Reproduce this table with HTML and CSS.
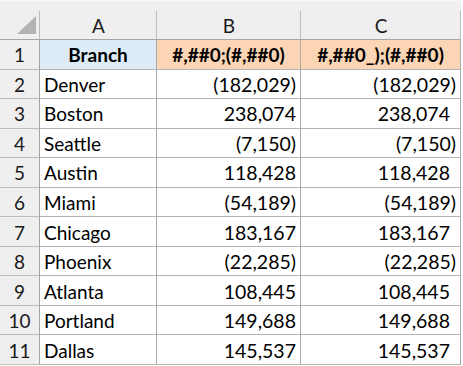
FILE: index.html
```html
<!DOCTYPE html>
<html>
<head>
<meta charset="utf-8">
<link rel="stylesheet" href="styles.css">
</head>
<body>
<div class="sheet">
  <div class="hd corner"><svg class="tri" width="19" height="18" viewBox="0 0 19 18"><polygon points="19,0 19,18 0,18" fill="#b3b3b3"/></svg></div>
  <div class="hd col">A</div>
  <div class="hd col">B</div>
  <div class="hd col">C</div>

  <div class="rh">1</div>
  <div class="c title blue">Branch</div>
  <div class="c title peach">#,##0;(#,##0)</div>
  <div class="c title peach">#,##0_);(#,##0)</div>

  <div class="rh">2</div><div class="c">Denver</div><div class="c num">(182,029)</div><div class="c num">(182,029)</div>
  <div class="rh">3</div><div class="c">Boston</div><div class="c num">238,074</div><div class="c num pos">238,074</div>
  <div class="rh">4</div><div class="c">Seattle</div><div class="c num">(7,150)</div><div class="c num">(7,150)</div>
  <div class="rh">5</div><div class="c">Austin</div><div class="c num">118,428</div><div class="c num pos">118,428</div>
  <div class="rh">6</div><div class="c">Miami</div><div class="c num">(54,189)</div><div class="c num">(54,189)</div>
  <div class="rh">7</div><div class="c">Chicago</div><div class="c num">183,167</div><div class="c num pos">183,167</div>
  <div class="rh">8</div><div class="c">Phoenix</div><div class="c num">(22,285)</div><div class="c num">(22,285)</div>
  <div class="rh">9</div><div class="c">Atlanta</div><div class="c num">108,445</div><div class="c num pos">108,445</div>
  <div class="rh">10</div><div class="c">Portland</div><div class="c num">149,688</div><div class="c num pos">149,688</div>
  <div class="rh">11</div><div class="c">Dallas</div><div class="c num">145,537</div><div class="c num pos">145,537</div>
</div>
</body>
</html>
```

FILE: styles.css
```css
html, body {
  margin: 0;
  padding: 0;
  background: #ffffff;
}
.sheet {
  display: grid;
  grid-template-columns: 40px 117px 144px 160px;
  grid-template-rows: 40px repeat(11, 29.55px);
  font-family: Lato, "Open Sans", sans-serif;
  font-size: 19px;
  color: #000;
}
.hd {
  background: #efefef linear-gradient(#bcbcbc, #bcbcbc) right bottom / 1px 28px no-repeat;
  border-bottom: 1px solid #a6a6a6;
  border-top: 1px solid #f8f8f8;
  box-sizing: border-box;
}
.col {
  display: flex;
  align-items: center;
  justify-content: center;
  padding-top: 11px;
  color: #1a1a1a;
}
.corner {
  display: flex;
  align-items: flex-end;
  justify-content: flex-end;
  padding: 0 4px 5px 0;
}
.tri {
  display: block;
}
.rh {
  background: #efefef;
  border-right: 1px solid #a6a6a6;
  border-bottom: 1px solid #bdbdbd;
  display: flex;
  align-items: center;
  justify-content: center;
  padding-top: 1px;
  box-sizing: border-box;
  color: #1a1a1a;
}
.c {
  border-right: 1px solid #a8a8a8;
  border-bottom: 1px solid #b4b4b4;
  display: flex;
  align-items: center;
  padding: 1px 4px 0 4px;
  box-sizing: border-box;
  white-space: nowrap;
  overflow: hidden;
}
.num {
  justify-content: flex-end;
  font-size: 19.5px;
}
.pos {
  padding-right: 10px;
}
.title {
  font-weight: 700;
  justify-content: center;
}
.blue {
  background: #ddebf7;
}
.peach {
  background: #fcd5b4;
}
```
